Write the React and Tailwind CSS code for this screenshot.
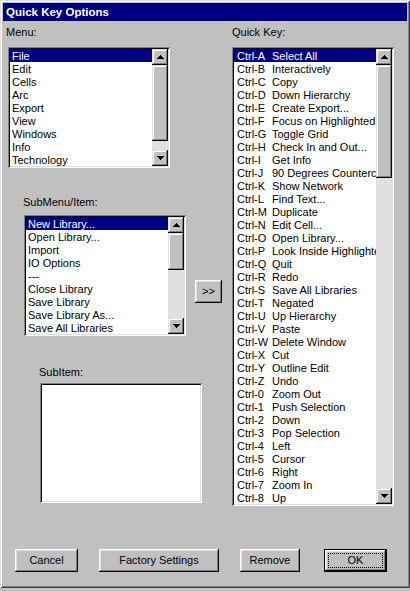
import React from 'react';

const menuItems = ['File', 'Edit', 'Cells', 'Arc', 'Export', 'View', 'Windows', 'Info', 'Technology'];

const subItems = [
  'New Library...',
  'Open Library...',
  'Import',
  'IO Options',
  '---',
  'Close Library',
  'Save Library',
  'Save Library As...',
  'Save All Libraries',
];

const quickKeys = [
  ['Ctrl-A', 'Select All'],
  ['Ctrl-B', 'Interactively'],
  ['Ctrl-C', 'Copy'],
  ['Ctrl-D', 'Down Hierarchy'],
  ['Ctrl-E', 'Create Export...'],
  ['Ctrl-F', 'Focus on Highlighted'],
  ['Ctrl-G', 'Toggle Grid'],
  ['Ctrl-H', 'Check In and Out...'],
  ['Ctrl-I', 'Get Info'],
  ['Ctrl-J', '90 Degrees Counterclockwise'],
  ['Ctrl-K', 'Show Network'],
  ['Ctrl-L', 'Find Text...'],
  ['Ctrl-M', 'Duplicate'],
  ['Ctrl-N', 'Edit Cell...'],
  ['Ctrl-O', 'Open Library...'],
  ['Ctrl-P', 'Look Inside Highlighted'],
  ['Ctrl-Q', 'Quit'],
  ['Ctrl-R', 'Redo'],
  ['Ctrl-S', 'Save All Libraries'],
  ['Ctrl-T', 'Negated'],
  ['Ctrl-U', 'Up Hierarchy'],
  ['Ctrl-V', 'Paste'],
  ['Ctrl-W', 'Delete Window'],
  ['Ctrl-X', 'Cut'],
  ['Ctrl-Y', 'Outline Edit'],
  ['Ctrl-Z', 'Undo'],
  ['Ctrl-0', 'Zoom Out'],
  ['Ctrl-1', 'Push Selection'],
  ['Ctrl-2', 'Down'],
  ['Ctrl-3', 'Pop Selection'],
  ['Ctrl-4', 'Left'],
  ['Ctrl-5', 'Cursor'],
  ['Ctrl-6', 'Right'],
  ['Ctrl-7', 'Zoom In'],
  ['Ctrl-8', 'Up'],
];

const raised =
  'shadow-[inset_-1px_-1px_#0a0a0a,inset_1px_1px_#ffffff,inset_-2px_-2px_#808080,inset_2px_2px_#dfdfdf]';
const raisedSb =
  'shadow-[inset_-1px_-1px_#0a0a0a,inset_1px_1px_#dfdfdf,inset_-2px_-2px_#808080,inset_2px_2px_#ffffff]';
const sunken =
  'shadow-[inset_1px_1px_#808080,inset_-1px_-1px_#ffffff,inset_2px_2px_#0a0a0a,inset_-2px_-2px_#dfdfdf]';

const Arrow = ({ down }) => (
  <svg width="7" height="4" viewBox="0 0 7 4" className={down ? 'rotate-180' : ''}>
    <path d="M3 0h1v1h1v1h1v1h1v1H0V3h1V2h1V1h1z" fill="#000" />
  </svg>
);

const ScrollBar = ({ thumb }) => (
  <div className="flex flex-col w-[16px] h-full bg-[#e0e0e0] shrink-0">
    <div className={`h-[16px] bg-[#c0c0c0] flex items-center justify-center ${raisedSb}`}>
      <Arrow />
    </div>
    <div className={`bg-[#c0c0c0] ${thumb} ${raisedSb}`}></div>
    <div className="flex-1"></div>
    <div className={`h-[16px] bg-[#c0c0c0] flex items-center justify-center ${raisedSb}`}>
      <Arrow down />
    </div>
  </div>
);

const Row = ({ active, children }) => (
  <div
    className={`h-[13px] leading-[14px] pl-[2px] whitespace-pre ${
      active ? 'bg-[#000080] text-white' : 'text-black'
    }`}
  >
    {children}
  </div>
);

const Button = ({ children, className = '' }) => (
  <div
    className={`h-[23px] bg-[#c0c0c0] flex items-center justify-center text-[11px] text-black ${raised} ${className}`}
  >
    {children}
  </div>
);

export default function App() {
  return (
    <div className="w-[410px] h-[591px] bg-[#c0c0c0] font-['Liberation_Sans',Arial,sans-serif] text-[11px] text-black">
      <div className="h-[588px] p-[3px] shadow-[inset_1px_1px_#dfdfdf,inset_-1px_-1px_#404040,inset_2px_2px_#ffffff,inset_-2px_-2px_#808080]">
        {/* Title bar */}
        <div className="h-[18px] bg-[#000080] text-white font-bold text-[11.5px] leading-[18px] pl-[3px]">
          Quick Key Options
        </div>

        <div className="flex">
          {/* Left column */}
          <div className="w-[183px] flex flex-col">
            <div className="mt-[5px] ml-[3px] h-[13px] leading-[13px]">Menu:</div>
            <div className={`mt-[8px] ml-[5px] w-[162px] h-[121px] p-[2px] bg-white flex ${sunken}`}>
              <div className="flex-1 overflow-hidden">
                {menuItems.map((m, i) => (
                  <Row key={m} active={i === 0}>{m}</Row>
                ))}
              </div>
              <ScrollBar thumb="h-[76px]" />
            </div>

            <div className="mt-[28px] ml-[20px] h-[13px] leading-[13px]">SubMenu/Item:</div>
            <div className={`mt-[6px] ml-[21px] w-[162px] h-[121px] p-[2px] bg-white flex ${sunken}`}>
              <div className="flex-1 overflow-hidden">
                {subItems.map((m, i) => (
                  <Row key={m} active={i === 0}>{m}</Row>
                ))}
              </div>
              <ScrollBar thumb="h-[37px]" />
            </div>

            <div className="mt-[30px] ml-[36px] h-[13px] leading-[13px]">SubItem:</div>
            <div className={`mt-[4px] ml-[37px] w-[162px] h-[120px] bg-white ${sunken}`}></div>
          </div>

          {/* Move button */}
          <div className="ml-[9px] mt-[259px]">
            <Button className="w-[27px]">&gt;&gt;</Button>
          </div>

          {/* Right column */}
          <div className="ml-[10px] flex flex-col">
            <div className="mt-[5px] h-[13px] leading-[13px]">Quick Key:</div>
            <div className={`mt-[8px] w-[162px] h-[459px] p-[2px] bg-white flex ${sunken}`}>
              <div className="flex-1 overflow-hidden">
                {quickKeys.map(([k, label], i) => (
                  <Row key={k} active={i === 0}>
                    <span className="inline-block w-[36px] pl-px">{k}</span>
                    {label}
                  </Row>
                ))}
              </div>
              <ScrollBar thumb="h-[113px]" />
            </div>
          </div>
        </div>

        {/* Bottom buttons */}
        <div className="flex mt-[43px]">
          <Button className="ml-[12px] w-[63px]">Cancel</Button>
          <Button className="ml-[21px] w-[120px]">Factory Settings</Button>
          <Button className="ml-[21px] w-[60px]">Remove</Button>
          <div className="ml-[24px] w-[63px] h-[23px] border border-black">
            <div className={`h-full p-[3px] ${raised}`}>
              <div className="h-full border border-dotted border-black flex items-center justify-center">
                OK
              </div>
            </div>
          </div>
        </div>
      </div>
    </div>
  );
}
